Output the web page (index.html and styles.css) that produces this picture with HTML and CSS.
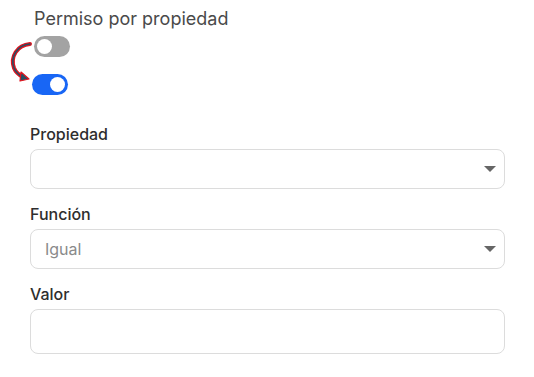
FILE: index.html
```html
<!DOCTYPE html>
<html lang="es">
<head>
    <meta charset="UTF-8">
    <meta name="viewport" content="width=device-width, initial-scale=1.0">
    <title>Permiso por propiedad</title>
    <link rel="stylesheet" href="styles.css">
</head>
<body>

<!-- Permiso -->
<div class="permiso">
    <h2 class="permiso-title">Permiso por propiedad</h2>

    <div class="toggles">
        <svg class="swap-arrow" width="26" height="46" viewBox="0 0 26 46">
            <path d="M22 4 C9 5, 2 17, 6 28 C8 33, 11 35, 15 37" fill="none" stroke="#e0141e" stroke-width="4" stroke-linecap="round"/>
            <path d="M22 4 C9 5, 2 17, 6 28 C8 33, 11 35, 15 37" fill="none" stroke="#2b4d63" stroke-width="1.6" stroke-linecap="round"/>
            <path d="M13 32 L21 39 L12 41 Z" fill="#2b4d63" stroke="#e0141e" stroke-width="1.2" stroke-linejoin="round"/>
        </svg>
        <span class="switch off"><span class="knob"></span></span>
        <span class="switch on"><span class="knob"></span></span>
    </div>
</div>

<!-- Campos -->
<form class="fields">
    <label class="field-label">Propiedad</label>
    <div class="select-box">
        <span class="value"></span>
        <span class="caret"></span>
    </div>

    <label class="field-label">Función</label>
    <div class="select-box">
        <span class="value placeholder">Igual</span>
        <span class="caret"></span>
    </div>

    <label class="field-label">Valor</label>
    <div class="input-box"></div>
</form>

</body>
</html>
```

FILE: styles.css
```css
/* General */
* {
    margin: 0;
    padding: 0;
    box-sizing: border-box;
    font-family: Inter, "Noto Sans", sans-serif;
}

body {
    background: #fff;
    color: #333;
    width: 534px;
    height: 377px;
    overflow: hidden;
}

/* Permiso */
.permiso {
    padding: 8px 0 0 34px;
}

.permiso-title {
    font-size: 18px;
    font-weight: 400;
    line-height: 22px;
    color: #4a4a4a;
    margin: 0;
}

.toggles {
    position: relative;
    display: flex;
    flex-direction: column;
    align-items: flex-start;
    gap: 17px;
    margin-top: 6px;
}

.swap-arrow {
    position: absolute;
    left: -26px;
    top: 4px;
}

.switch {
    position: relative;
    display: block;
    width: 36px;
    height: 21px;
    border-radius: 11px;
}

.switch .knob {
    position: absolute;
    top: 3px;
    width: 15px;
    height: 15px;
    border-radius: 50%;
    background: #fff;
}

.switch.off {
    background: #a3a3a3;
}

.switch.off .knob {
    left: 3px;
}

.switch.on {
    background: #1866f5;
    margin-left: -2px;
}

.switch.on .knob {
    right: 3px;
}

/* Campos */
.fields {
    display: flex;
    flex-direction: column;
    padding: 0 29px 0 30px;
    margin-top: 29px;
}

.field-label {
    font-size: 16px;
    font-weight: 500;
    line-height: 20px;
    color: #2e2e2e;
    margin-bottom: 5px;
}

.select-box,
.input-box {
    display: flex;
    align-items: center;
    justify-content: space-between;
    height: 40px;
    border: 1px solid #dcdcdc;
    border-radius: 8px;
    padding: 0 8px 0 14px;
    margin-bottom: 15px;
    background: #fff;
}

.input-box {
    height: 45px;
}

.value {
    font-size: 16px;
    color: #333;
}

.placeholder {
    color: #8a8a8a;
}

.caret {
    width: 0;
    height: 0;
    border-left: 6px solid transparent;
    border-right: 6px solid transparent;
    border-top: 6px solid #666;
}
```
